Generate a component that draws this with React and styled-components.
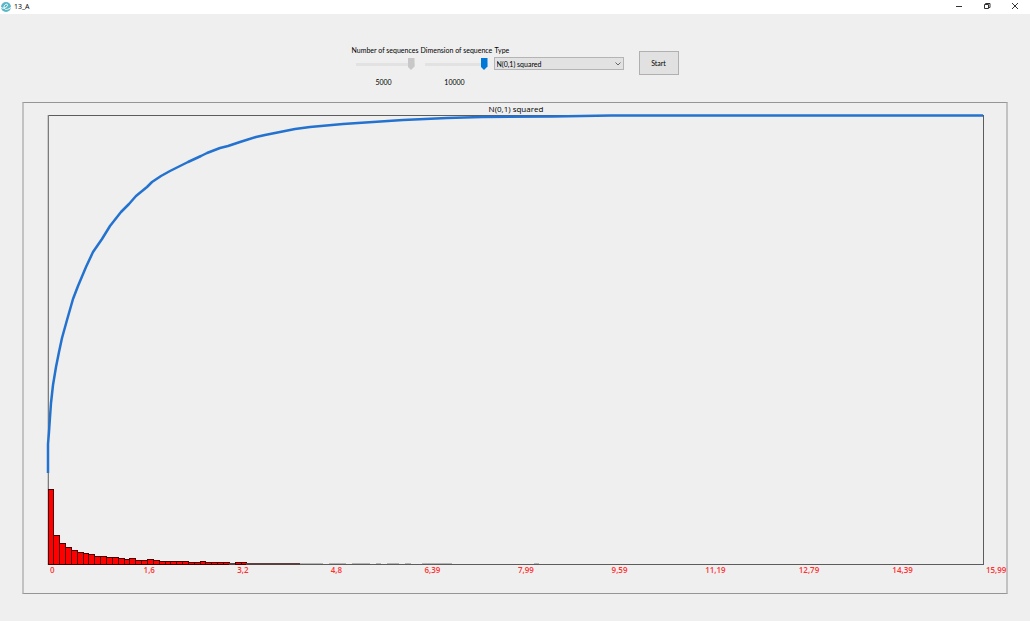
import React, { useState } from "react";
import styled, { createGlobalStyle, css } from "styled-components";

const GlobalStyle = createGlobalStyle`
  * {
    box-sizing: border-box;
  }
  body {
    margin: 0;
    background: #efefef;
    color: #000;
    font-family: Lato, "Liberation Sans", sans-serif;
    font-size: 7px;
    line-height: 10px;
  }
`;

const Window = styled.div`
  display: flex;
  flex-direction: column;
  min-height: 100vh;
`;

const TitleBar = styled.header`
  display: flex;
  align-items: center;
  height: 14px;
  background: #fff;
`;

const AppIcon = styled.svg`
  width: 12px;
  height: 12px;
  margin-right: 2px;
`;

const WindowTitle = styled.h1`
  flex: 1;
  margin: 0;
  font-family: "Open Sans", sans-serif;
  font-size: 7px;
  font-weight: normal;
`;

const WindowButton = styled.button`
  display: flex;
  align-items: center;
  justify-content: center;
  width: 28px;
  height: 14px;
  padding: 0 3px 2px 0;
  border: 0;
  background: none;

  svg {
    width: 8px;
    height: 8px;
    fill: none;
    stroke: #333;
  }
`;

const Toolbar = styled.form`
  display: flex;
  justify-content: center;
  gap: 5px;
  padding: 31px 0 15px;
`;

const Field = styled.div`
  display: flex;
  flex-direction: column;
  width: ${(props) => props.$width}px;
  white-space: nowrap;

  output {
    margin-top: 7px;
    text-align: center;
  }
`;

const thumb = css`
  appearance: none;
  width: 7px;
  height: 12px;
  border: 0;
  border-radius: 0;
  background: #0078d7;
  clip-path: polygon(0 0, 100% 0, 100% 70%, 50% 100%, 0 70%);
`;

const Slider = styled.input`
  appearance: none;
  height: 12px;
  margin: 3px 1px 0 4px;
  min-width: 0;
  background: linear-gradient(#e2e2e2, #e2e2e2) center / 100% 3px no-repeat;

  &::-webkit-slider-thumb {
    ${thumb}
  }
  &::-moz-range-thumb {
    ${thumb}
  }
  &:disabled::-webkit-slider-thumb {
    background: #c8c8c8;
  }
  &:disabled::-moz-range-thumb {
    background: #c8c8c8;
  }
`;

const SelectBox = styled.div`
  display: grid;
  align-items: center;
  margin-top: 2px;

  select,
  svg {
    grid-area: 1 / 1;
  }
  select {
    appearance: none;
    height: 13px;
    padding: 0 12px 0 2px;
    border: 1px solid #b4b4b4;
    border-radius: 0;
    background: #e2e2e2;
    color: inherit;
    font: inherit;
  }
  svg {
    justify-self: end;
    width: 6px;
    height: 4px;
    margin-right: 3px;
    fill: none;
    stroke: #666;
    pointer-events: none;
  }
`;

const TypeField = styled(Field)`
  label {
    padding-left: 1px;
  }
`;

const StartButton = styled.button`
  width: 40px;
  height: 24px;
  margin: 6px 0 0 10px;
  padding: 0;
  border: 1px solid #b0b0b0;
  background: #e1e1e1;
  color: inherit;
  font: inherit;
`;

const ChartPanel = styled.figure`
  margin: 0 22px;
  padding: 0 22px 18px 24px;
  border: solid;
  border-width: 1px 2px;
  border-color: #959595 #c2c2c2;
  font-family: "Open Sans", sans-serif;
  font-size: 8px;

  figcaption {
    line-height: 12px;
    text-align: center;
  }
`;

const Plot = styled.svg`
  display: block;
  width: 100%;
  aspect-ratio: 936 / 450;
  overflow: visible;
`;

const Axis = styled.ol`
  display: flex;
  margin: 0 -2px 0 0;
  padding: 0;
  list-style: none;
  color: #ff3030;
  font-weight: 600;

  li {
    flex: 1 1 0;
    width: 0;
    padding-left: 2px;
    white-space: nowrap;
  }
  li:last-child {
    flex: none;
  }
`;

const TYPES = ["N(0,1)", "N(0,1) squared"];

const TICKS = ["0", "1,6", "3,2", "4,8", "6,39", "7,99", "9,59", "11,19", "12,79", "14,39", "15,99"];

const BIN_WIDTH = 5.85;

const BINS = [
  75, 29, 21, 17, 14, 12, 11, 10, 8, 8, 7, 7, 6, 5, 6, 4, 4, 5, 4, 3, 3, 3, 3, 3, 2, 2, 3, 2, 2, 2, 2, 1, 2, 2, 1, 1,
  1, 1, 1, 1, 1, 1, 1,
];

// bins with only a handful of samples: [first bin, number of bins]
const SPARSE_BINS = [
  [43, 3],
  [46, 1],
  [48, 2],
  [50, 1],
  [52, 3],
  [56, 1],
  [58, 2],
  [61, 1],
  [64, 5],
  [83, 1],
];

const CURVE = [
  [0, 358], [0, 329], [1, 317], [2, 302], [3, 288], [5, 270], [8, 252], [11, 237], [14, 223], [19, 205],
  [25, 184], [30, 171], [38, 152], [45, 137], [54, 124], [62, 111], [73, 97], [81, 89], [88, 81], [99, 72],
  [104, 67], [113, 61], [122, 56], [130, 52], [140, 47], [153, 41], [159, 38], [172, 33], [180, 31], [192, 27],
  [208, 22], [217, 20], [237, 16], [247, 14], [262, 12], [295, 9], [325, 7], [355, 5], [399, 3], [434, 2],
  [505, 1.5], [563, 0.5], [935, 0.5],
];

const binEdge = (i) => Math.floor(i * BIN_WIDTH);

const Histogram = () => (
  <Plot viewBox="0 0 936 450" preserveAspectRatio="none" role="img" aria-label="Distribution and histogram">
    <g shapeRendering="crispEdges">
      <path d="M0 0.5H936M0 449.5H936M935.5 0V450" fill="none" stroke="#5c5c5c" />
      <path d="M-0.5 0V450" stroke="#cccccc" />
      <path d="M0.5 0V450" stroke="#7c7c7c" />
      {BINS.map((height, i) => (
        <rect
          key={i}
          x={binEdge(i) + 0.5}
          y={449.5 - height}
          width={binEdge(i + 1) - binEdge(i)}
          height={height}
          fill="#ff0000"
          stroke={height > 1 ? "#4a0000" : "#5a4040"}
        />
      ))}
      {SPARSE_BINS.map(([first, count]) => (
        <rect key={first} x={first * BIN_WIDTH} y={448} width={count * BIN_WIDTH} height={1} fill="#b4b4b4" />
      ))}
    </g>
    <polyline points={CURVE.join(" ")} fill="none" stroke="#2472cf" strokeWidth="2.5" strokeLinejoin="round" />
  </Plot>
);

const App = () => {
  const [sequences, setSequences] = useState(5000);
  const [dimension, setDimension] = useState(10000);
  const [type, setType] = useState(TYPES[1]);
  const [plotted, setPlotted] = useState(TYPES[1]);

  const start = (e) => {
    e.preventDefault();
    setPlotted(type);
  };

  return (
    <Window>
      <GlobalStyle />
      <TitleBar>
        <AppIcon viewBox="0 0 12 12" aria-hidden="true">
          <circle cx="6" cy="6" r="5" fill="#58b8c8" />
          <path
            d="M1 6.500C3 8 5 7 7 5.500C8.500 4 7 2.500 5.500 3.500C4 4.500 3.500 6 4.500 7.500C6 9.500 8.500 8 11 6.500"
            fill="none"
            stroke="#fff"
          />
        </AppIcon>
        <WindowTitle>13_A</WindowTitle>
        <WindowButton type="button" aria-label="Minimize">
          <svg viewBox="0 0 8 8">
            <path d="M1 4.500H7" />
          </svg>
        </WindowButton>
        <WindowButton type="button" aria-label="Restore">
          <svg viewBox="0 0 8 8">
            <path d="M1.500 2.500H5.500V6.500H1.500ZM2.500 2.500V1.500H7V5.500H5.500" />
          </svg>
        </WindowButton>
        <WindowButton type="button" aria-label="Close">
          <svg viewBox="0 0 8 8">
            <path d="M1 1L7 7M7 1L1 7" />
          </svg>
        </WindowButton>
      </TitleBar>

      <Toolbar onSubmit={start}>
        <Field $width={64}>
          <label htmlFor="sequences">Number of sequences</label>
          <Slider
            id="sequences"
            type="range"
            min={0}
            max={5000}
            value={sequences}
            onChange={(e) => setSequences(e.target.value)}
            disabled
          />
          <output htmlFor="sequences">{sequences}</output>
        </Field>
        <Field $width={68}>
          <label htmlFor="dimension">Dimension of sequence</label>
          <Slider
            id="dimension"
            type="range"
            min={0}
            max={10000}
            value={dimension}
            onChange={(e) => setDimension(e.target.value)}
          />
          <output htmlFor="dimension">{dimension}</output>
        </Field>
        <TypeField $width={130}>
          <label htmlFor="type">Type</label>
          <SelectBox>
            <select id="type" value={type} onChange={(e) => setType(e.target.value)}>
              {TYPES.map((name) => (
                <option key={name}>{name}</option>
              ))}
            </select>
            <svg viewBox="0 0 6 4" aria-hidden="true">
              <path d="M0.500 0.500L3 3L5.500 0.500" />
            </svg>
          </SelectBox>
        </TypeField>
        <StartButton type="submit">Start</StartButton>
      </Toolbar>

      <ChartPanel>
        <figcaption>{plotted}</figcaption>
        <Histogram />
        <Axis>
          {TICKS.map((tick) => (
            <li key={tick}>{tick}</li>
          ))}
        </Axis>
      </ChartPanel>
    </Window>
  );
};

export default App;
